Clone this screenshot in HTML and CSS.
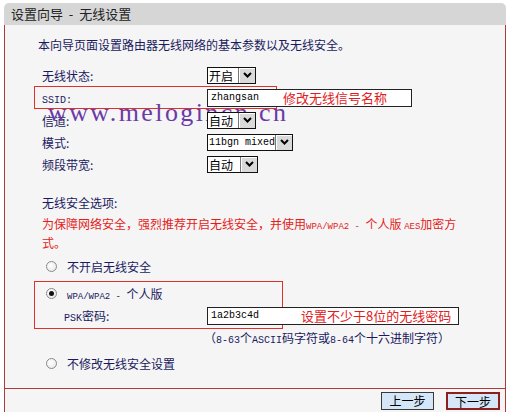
FILE: index.html
```html
<!DOCTYPE html>
<html lang="zh-CN">
<head>
    <meta charset="UTF-8">
    <title>设置向导 - 无线设置</title>
    <link rel="stylesheet" href="styles.css">
</head>
<body>
    <div class="wizard">
        <div class="wizard-title">设置向导&nbsp; -&nbsp; 无线设置</div>
        <div class="wizard-body">
            <p class="intro">本向导页面设置路由器无线网络的基本参数以及无线安全。</p>

            <div class="row">
                <span class="lbl">无线状态:</span>
                <span class="sel sel-open"><span class="sel-v">开启</span><span class="sel-btn"><svg width="9" height="6" viewBox="0 0 9 6"><polyline points="1,1 4.5,4.5 8,1"/></svg></span></span>
            </div>
            <div class="row row-mark">
                <span class="lbl"><span class="en">SSID:</span></span>
                <span class="field field-ssid"><span class="val en">zhangsan</span><span class="note">修改无线信号名称</span></span>
            </div>
            <div class="row">
                <span class="lbl">信道:</span>
                <span class="sel sel-chan"><span class="sel-v">自动</span><span class="sel-btn"><svg width="9" height="6" viewBox="0 0 9 6"><polyline points="1,1 4.5,4.5 8,1"/></svg></span></span>
            </div>
            <div class="row">
                <span class="lbl">模式:</span>
                <span class="sel sel-mode"><span class="sel-v en">11bgn mixed</span><span class="sel-btn"><svg width="9" height="6" viewBox="0 0 9 6"><polyline points="1,1 4.5,4.5 8,1"/></svg></span></span>
            </div>
            <div class="row">
                <span class="lbl">频段带宽:</span>
                <span class="sel sel-bw"><span class="sel-v">自动</span><span class="sel-btn"><svg width="9" height="6" viewBox="0 0 9 6"><polyline points="1,1 4.5,4.5 8,1"/></svg></span></span>
            </div>

            <p class="sec">无线安全选项:</p>
            <p class="warn">为保障网络安全，强烈推荐开启无线安全，并使用<span class="en-s">WPA/WPA2 - </span>个人版 <span class="en-s">AES</span>加密方<br>式。</p>

            <div class="opt">
                <span class="radio"></span>
                <span>不开启无线安全</span>
            </div>
            <div class="opt-box">
                <div class="opt">
                    <span class="radio checked"></span>
                    <span><span class="en-s">WPA/WPA2 - </span>个人版</span>
                </div>
                <div class="psk">
                    <span class="lbl"><span class="en">PSK</span>密码:</span>
                    <span class="field field-psk"><span class="val en">1a2b3c4d</span><span class="note">设置不少于8位的无线密码</span></span>
                </div>
            </div>
            <p class="hint">（<span class="en">8-63</span>个<span class="en">ASCII</span>码字符或<span class="en">8-64</span>个十六进制字符）</p>
            <div class="opt opt-last">
                <span class="radio"></span>
                <span>不修改无线安全设置</span>
            </div>

            <div class="watermark">www.melogincn.cn</div>
        </div>
        <div class="wizard-foot">
            <button class="btn">上一步</button>
            <button class="btn btn-next">下一步</button>
        </div>
    </div>
</body>
</html>
```

FILE: styles.css
```css
/* Router setup wizard - wireless page */
:root {
    --frame-red: #b03a3a;
    --mark-red: #e0302c;
    --text-navy: #1a1a5e;
    --panel-bg: #f5f5f5;
}

body {
    margin: 0;
    background: #fff;
    font-family: "Noto Sans CJK SC", sans-serif;
    font-size: 12px;
    color: var(--text-navy);
}

p {
    margin: 0;
}

/* latin runs look like the old bitmap song font: narrow mono */
.en {
    font-family: "Liberation Mono", monospace;
    font-size: 10px;
}

.en-s {
    font-family: "Liberation Mono", monospace;
    font-size: 9px;
}

.wizard {
    width: 502px;
    margin: 3px 0 0 4px;
}

.wizard-title {
    height: 22px;
    line-height: 22px;
    padding-left: 7px;
    background: #d6d6d6;
    border-radius: 5px 5px 0 0;
    font-size: 13px;
    color: #222;
}

.wizard-body {
    position: relative;
    background: var(--panel-bg);
    border-left: 1px solid var(--frame-red);
    border-right: 1px solid var(--frame-red);
    padding: 11px 0 16px 37px;
}

.intro {
    margin: 0 0 10px -4px;
    line-height: 18px;
}

/* form rows */
.row {
    display: flex;
    align-items: center;
    height: 22px;
}

.lbl {
    width: 165px;
    flex-shrink: 0;
}

.row-mark {
    height: 23px;
    width: 243px;
    box-sizing: border-box;
    margin-left: -8px;
    padding-left: 8px;
    outline: 1px solid var(--mark-red);
    outline-offset: -1px;
}

/* fake select boxes */
.sel {
    position: relative;
    z-index: 2;
    display: flex;
    flex-shrink: 0;
    height: 17px;
    box-sizing: border-box;
    border: 1px solid #111;
    background: #fff;
    color: #000;
}

.sel-open,
.sel-chan { width: 49px; }
.sel-mode { width: 86px; }
.sel-bw { width: 51px; }

.sel-v {
    flex: 1;
    padding-left: 1px;
    line-height: 15px;
    white-space: nowrap;
}

.sel-btn {
    width: 16px;
    display: flex;
    align-items: center;
    justify-content: center;
    background: #d9d9d9;
    border-left: 1px solid #777;
    box-shadow: inset 1px 1px 0 #fff;
}

.sel-btn polyline {
    fill: none;
    stroke: #000;
    stroke-width: 2;
}

/* text fields */
.field {
    position: relative;
    z-index: 2;
    display: flex;
    align-items: center;
    flex-shrink: 0;
    height: 18px;
    box-sizing: border-box;
    border: 1px solid #222;
    background: #fff;
    color: #000;
}

.field-ssid { width: 205px; }
.field-psk { width: 252px; }

.val {
    padding-left: 3px;
    flex-shrink: 0;
}

.field-ssid .val { width: 72px; }
.field-psk .val { width: 90px; }

.note {
    font-size: 13px;
    color: #e0201c;
    white-space: nowrap;
}

/* security section */
.sec {
    margin-top: 19px;
    line-height: 18px;
}

.warn {
    margin-top: 4px;
    line-height: 16px;
    color: #e41c1c;
}

.opt {
    display: flex;
    align-items: center;
    height: 18px;
    margin-top: 6px;
}

.radio {
    width: 11px;
    height: 11px;
    margin: 0 10px 0 4px;
    box-sizing: border-box;
    border: 1px solid #8a8a8a;
    border-radius: 50%;
    background: radial-gradient(circle at 40% 40%, #fff, #e4e4e4);
    display: grid;
    place-items: center;
}

.radio.checked::after {
    content: '';
    width: 5px;
    height: 5px;
    border-radius: 50%;
    background: #111;
}

.opt-box {
    width: 249px;
    box-sizing: border-box;
    margin: 6px 0 0 -8px;
    padding: 2px 0 3px 7px;
    border: 1px solid var(--mark-red);
}

.opt-box .opt {
    margin-top: 0;
}

.psk {
    display: flex;
    align-items: center;
    height: 19px;
    margin-top: 4px;
}

.psk .lbl {
    width: 143px;
    padding-left: 22px;
}

.hint {
    margin-left: 162px;
    line-height: 18px;
}

.opt-last {
    margin-top: 4px;
}

/* melogincn watermark laid over the form */
.watermark {
    position: absolute;
    z-index: 1;
    left: 43px;
    top: 75px;
    font-family: "Liberation Serif", serif;
    font-size: 26px;
    line-height: 26px;
    letter-spacing: 2.4px;
    color: #6a3aa8;
    pointer-events: none;
}

/* button bar */
.wizard-foot {
    display: flex;
    justify-content: flex-end;
    gap: 12px;
    height: 27px;
    box-sizing: border-box;
    padding: 3px 5px 0 0;
    background: var(--panel-bg);
    border: 1px solid var(--frame-red);
}

.btn {
    width: 53px;
    height: 18px;
    padding: 0;
    font-family: "Noto Sans CJK SC", sans-serif;
    font-size: 12px;
    line-height: 16px;
    color: #000;
    background: #d5e6f8;
    border: 1px solid #3a3a3a;
}

.btn-next {
    width: 54px;
    border: 2px solid #8e1f1f;
}
```
